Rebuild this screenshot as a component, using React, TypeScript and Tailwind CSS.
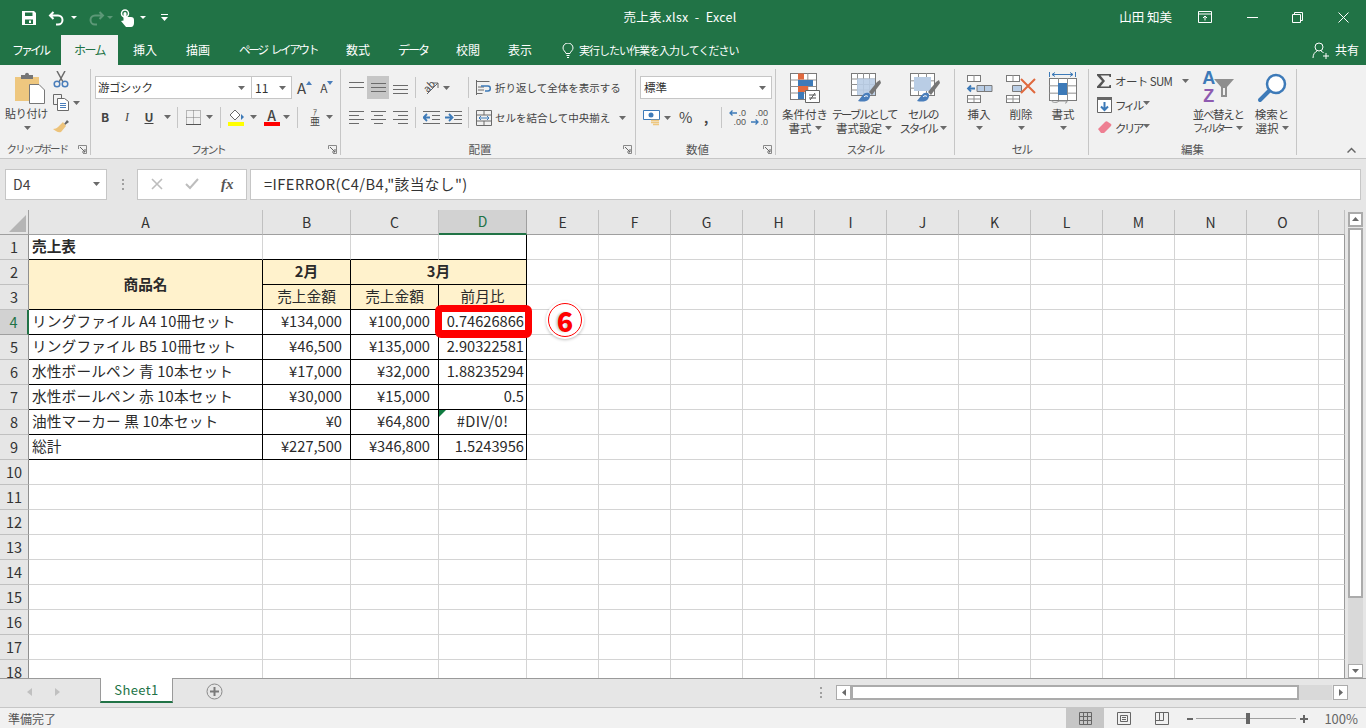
import type { ReactNode } from 'react'

const jp = { fontFamily: '"Noto Sans CJK JP", "Liberation Sans", sans-serif' }

const Caret = ({ className = '' }: { className?: string }) => (
  <svg width="7" height="4" viewBox="0 0 7 4" className={`inline-block shrink-0 ${className}`}>
    <path d="M0 0h7L3.5 4z" fill="#6a6a6a" />
  </svg>
)

const Sep = ({ className = '' }: { className?: string }) => <div className={`h-[21px] w-px shrink-0 bg-[#c6c6c6] ${className}`} />

const Launcher = () => (
  <svg width="9" height="9" viewBox="0 0 9 9" className="absolute right-[3px] top-[3px]">
    <path d="M.5 4V.5H8.500V8.500H5" fill="none" stroke="#8a8a8a" />
    <path d="M2 2l5 5M7 4v3H4" fill="none" stroke="#666" />
  </svg>
)

function Group({ width, label, launcher, children }: { width: string; label: ReactNode; launcher?: boolean; children: ReactNode }) {
  return (
    <div className={`flex h-[86px] shrink-0 flex-col border-r border-[#c6c6c6] ${width}`}>
      <div className="h-[73px] shrink-0">{children}</div>
      <div className={`relative flex h-[14px] shrink-0 items-center justify-center whitespace-nowrap text-[11.5px] leading-[14px] text-[#555] ${launcher ? 'pr-[16px]' : ''}`}>
        {label}
        {launcher && <Launcher />}
      </div>
    </div>
  )
}

function Large({ width, icon, lines, caretBelow }: { width: string; icon: ReactNode; lines: ReactNode[]; caretBelow?: boolean }) {
  return (
    <div className={`flex shrink-0 flex-col items-center ${width}`}>
      <div className="mt-[3px] flex h-[32px] items-center justify-center">{icon}</div>
      <div className="mt-[3px] whitespace-nowrap text-center text-[11.5px] leading-[14px] text-[#444]">
        {lines.map((l, i) => (
          <div key={i} className="flex items-center justify-center gap-[3px]">{l}</div>
        ))}
        {caretBelow && <div className="flex h-[14px] items-center justify-center"><Caret /></div>}
      </div>
    </div>
  )
}

const HLines = ({ rows, width = 15 }: { rows: [number, number][]; width?: number }) => (
  <svg width={width} height="17" viewBox={`0 0 ${width} 17`} className="shrink-0">
    {rows.map(([y, x], i) => (
      <path key={i} d={`M${x} ${y + 0.5}H${width - (i % 2 === 1 && x === 0 ? 0 : x)}`} stroke="#6b6b6b" />
    ))}
  </svg>
)

const AlignIcon = ({ kind }: { kind: 'l' | 'c' | 'r' }) => {
  const ys = [2, 6, 10, 14]
  const seg = (i: number) => {
    const short = i % 2 === 1
    if (!short) return 'M0 0H15'
    if (kind === 'l') return 'M0 0H10'
    if (kind === 'r') return 'M5 0H15'
    return 'M3 0H12'
  }
  return (
    <svg width="15" height="17" viewBox="0 0 15 17" className="shrink-0">
      {ys.map((y, i) => <path key={y} transform={`translate(0 ${y + 0.5})`} d={seg(i)} stroke="#6b6b6b" />)}
    </svg>
  )
}

const IndentIcon = ({ flip }: { flip?: boolean }) => (
  <svg width="17" height="17" viewBox="0 0 17 17" className="shrink-0">
    {[2, 14].map(y => <path key={y} d={`M0 ${y + 0.5}H17`} stroke="#6b6b6b" />)}
    {[6, 10].map(y => <path key={y} d={`M9 ${y + 0.5}H17`} stroke="#6b6b6b" />)}
    {flip
      ? <path d="M0 8.500H6M4 5l3.500 3.500L4 12" stroke="#3d7ab8" strokeWidth="1.800" fill="none" />
      : <path d="M7 8.500H1M4 5L.5 8.500 4 12" stroke="#3d7ab8" strokeWidth="1.800" fill="none" />}
  </svg>
)

const DecimalIcon = ({ more }: { more?: boolean }) => (
  <svg width="18" height="19" viewBox="0 0 18 19" className="shrink-0" fontSize="9" fill="#555" textAnchor="end" style={{ fontFamily: '"Liberation Sans", sans-serif' }}>
    <text x="17" y="8">{more ? '.00' : '.0'}</text>
    <text x="17" y="17">{more ? '.0' : '.00'}</text>
    {more
      ? <path d="M0 14h7M4.500 11.500L7 14l-2.500 2.500" fill="none" stroke="#3d7ab8" strokeWidth="1.300" />
      : <path d="M8 5H1M3.500 2.500L1 5l2.500 2.500" fill="none" stroke="#3d7ab8" strokeWidth="1.300" />}
  </svg>
)

const TableGrid = ({ x, y, w, h, cols, rows }: { x: number; y: number; w: number; h: number; cols: number; rows: number }) => (
  <>
    <rect x={x + 0.5} y={y + 0.5} width={w} height={h} fill="#fff" stroke="#7a7a7a" />
    {Array.from({ length: cols - 1 }, (_, i) => (
      <path key={`c${i}`} d={`M${x + 0.5 + ((i + 1) * w) / cols} ${y}v${h}`} stroke="#8f8f8f" />
    ))}
    {Array.from({ length: rows - 1 }, (_, i) => (
      <path key={`r${i}`} d={`M${x} ${y + 0.5 + ((i + 1) * h) / rows}h${w}`} stroke="#8f8f8f" />
    ))}
  </>
)

const Brush = () => (
  <>
    <path d="M26 9l3-2 1 3-9 12-3-3z" fill="#767676" />
    <path d="M18 20c-3-1-5 0-7 3l-4 5c4 1 9 1 11-2 1-2 2-4 0-6z" fill="#4a7ebb" />
    <path d="M13 24c1-1.500 3-1.500 4-.5" stroke="#fff" fill="none" />
  </>
)

function ColHead({ label, active }: { label: string; active?: boolean }) {
  return (
    <div className={`flex items-center justify-center border-b border-r text-[14px] ${active ? 'border-b-2 border-b-[#217346] border-r-[#9f9f9f] bg-[#d2d2d2] text-[#217346]' : 'border-b-[#9f9f9f] border-r-[#c0c0c0] bg-[#e6e6e6] text-[#333]'}`}>
      {label}
    </div>
  )
}

function RowHead({ n }: { n: number }) {
  const active = n === 4
  return (
    <div className={`flex items-center justify-center border-b text-[14.5px] ${active ? 'border-r-2 border-b-[#9f9f9f] border-r-[#217346] bg-[#d2d2d2] text-[#217346]' : 'border-r border-b-[#c0c0c0] border-r-[#8f8f8f] bg-[#e6e6e6] text-[#333]'}`}>
      {n}
    </div>
  )
}

function Cell({ className = '', children }: { className?: string; children?: ReactNode }) {
  return <div className={`relative flex items-center overflow-hidden whitespace-nowrap border-b border-r pb-[2px] text-[14.67px] text-[#2a2a2a] ${className}`}>{children}</div>
}

const black = 'border-black'
const numB = 'border-black justify-end pr-[8px] text-[14.3px]'
const numD = 'border-black justify-end pr-[2px] text-[14.3px]'
const head = 'border-black justify-center bg-[#fff2cc]'

const dataRows = [
  ['リングファイル A4 10冊セット', '¥134,000', '¥100,000', '0.74626866'],
  ['リングファイル B5 10冊セット', '¥46,500', '¥135,000', '2.90322581'],
  ['水性ボールペン 青 10本セット', '¥17,000', '¥32,000', '1.88235294'],
  ['水性ボールペン 赤 10本セット', '¥30,000', '¥15,000', '0.5'],
  ['油性マーカー 黒 10本セット', '¥0', '¥64,800', '#DIV/0!'],
  ['総計', '¥227,500', '¥346,800', '1.5243956'],
]

const emptyCols = Array.from({ length: 12 }, (_, i) => i)
const colLetters = ['E', 'F', 'G', 'H', 'I', 'J', 'K', 'L', 'M', 'N', 'O', '']

const Blanks = ({ row }: { row: number }) => (
  <>
    {emptyCols.map(i => (
      <Cell key={`${row}-${i}`} className={`border-b-[#d4d4d4] ${i === 11 ? 'border-r-[#9a9a9a]' : 'border-r-[#d4d4d4]'}`} />
    ))}
  </>
)

function Sheet() {
  return (
    <div className="relative flex h-[468px] overflow-hidden bg-[#e6e6e6]">
      <div className="grid w-[1345px] shrink-0 grid-cols-[29px_234px_88px_88px_88px_repeat(11,72px)_26px] auto-rows-[25px] bg-white">
        <div className="flex items-end justify-end border-b border-r border-b-[#9f9f9f] border-r-[#9f9f9f] bg-[#e6e6e6] pb-[2px] pr-[2px]">
          <svg width="17" height="17" viewBox="0 0 17 17"><path d="M17 0v17H0z" fill="#b5b5b5" /></svg>
        </div>
        <ColHead label="A" />
        <ColHead label="B" />
        <ColHead label="C" />
        <ColHead label="D" active />
        {colLetters.map((c, i) => <ColHead key={i} label={c} />)}

        <RowHead n={1} />
        <Cell className="border-b-black border-r-[#d4d4d4] pl-[3px] font-bold">売上表</Cell>
        <Cell className="border-b-black border-r-[#d4d4d4]" />
        <Cell className="border-b-black border-r-[#d4d4d4]" />
        <Cell className="border-b-black border-r-black" />
        <Blanks row={1} />

        <RowHead n={2} />
        <Cell className={`row-span-2 font-bold ${head}`}>商品名</Cell>
        <Cell className={`font-bold ${head}`}>2月</Cell>
        <Cell className={`col-span-2 font-bold ${head}`}>3月</Cell>
        <Blanks row={2} />

        <RowHead n={3} />
        <Cell className={head}>売上金額</Cell>
        <Cell className={head}>売上金額</Cell>
        <Cell className={head}>前月比</Cell>
        <Blanks row={3} />

        {dataRows.map((r, i) => (
          <div key={i} className="contents">
            <RowHead n={i + 4} />
            <Cell className={`${black} pl-[3px] tracking-[0.15px]`}>{r[0]}</Cell>
            <Cell className={numB}>{r[1]}</Cell>
            <Cell className={numB}>{r[2]}</Cell>
            {r[3] === '#DIV/0!' ? (
              <Cell className={`${black} justify-center text-[14.3px] tracking-[0.4px]`}>
                <svg width="7" height="7" viewBox="0 0 7 7" className="absolute left-0 top-0"><path d="M0 0h7L0 7z" fill="#107c41" /></svg>
                {r[3]}
              </Cell>
            ) : (
              <Cell className={numD}>{r[3]}</Cell>
            )}
            <Blanks row={i + 4} />
          </div>
        ))}

        {[10, 11, 12, 13, 14, 15, 16, 17, 18].map(n => (
          <div key={n} className="contents">
            <RowHead n={n} />
            <Cell className="border-b-[#d4d4d4] border-r-[#d4d4d4]" />
            <Cell className="border-b-[#d4d4d4] border-r-[#d4d4d4]" />
            <Cell className="border-b-[#d4d4d4] border-r-[#d4d4d4]" />
            <Cell className="border-b-[#d4d4d4] border-r-[#d4d4d4]" />
            <Blanks row={n} />
          </div>
        ))}
      </div>

      {/* vertical scrollbar */}
      <div className="flex w-[21px] flex-col pl-[3px] pt-[2px]">
        <div className="flex h-[15px] w-[15px] items-center justify-center border-2 border-[#ababab] bg-white">
          <svg width="7" height="4" viewBox="0 0 7 4"><path d="M0 4h7L3.500 0z" fill="#6a6a6a" /></svg>
        </div>
        <div className="mt-px h-[371px] w-[15px] border-2 border-[#ababab] bg-white" />
        <div className="h-[66px] w-[15px] bg-[#d9d9d9]" />
        <div className="flex h-[14px] w-[15px] items-center justify-center border border-[#ababab] bg-white">
          <Caret />
        </div>
      </div>

      {/* annotation */}
      <div className="absolute left-[435px] top-[95px] h-[33px] w-[97px] rounded-[6px] border-[7px] border-b-[8px] border-[#ff0000]" />
      <div className="absolute left-[546px] top-[91px] flex h-[38px] w-[38px] items-center justify-center rounded-full bg-white shadow-[0_1px_3px_rgba(0,0,0,0.25)]">
        <div className="flex h-[34px] w-[34px] items-center justify-center rounded-full border border-[#ff0000] text-[27px] font-black leading-none text-[#ff0000] [text-shadow:-2px_0_2px_rgba(0,0,0,0.18)]" style={{ fontFamily: '"Noto Sans CJK JP", sans-serif' }}>
          6
        </div>
      </div>
    </div>
  )
}

export default function App() {
  return (
    <div className="h-[728px] w-[1366px] overflow-hidden bg-[#e6e6e6]" style={jp}>
      {/* title bar */}
      <div className="flex h-[35px] items-center bg-[#217346] text-white">
        <svg width="16" height="16" viewBox="0 0 16 16" className="ml-[21px]">
          <path fillRule="evenodd" d="M1 1h12l2 2v12H1zM4 2.500V6h7.500V2.500zM4 9.500V14h8V9.500zM8 10.500h2V13H8z" fill="#fff" />
        </svg>
        <svg width="18" height="16" viewBox="0 0 18 16" className="ml-[11px]">
          <path d="M5.500 2L2 5.500 5.500 9M2.500 5.500H10a4.500 4.500 0 0 1 0 9H8" fill="none" stroke="#fff" strokeWidth="2" />
        </svg>
        <svg width="6" height="3" viewBox="0 0 6 3" className="ml-[5px]"><path d="M0 0h6L3 3z" fill="#fff" /></svg>
        <svg width="18" height="16" viewBox="0 0 18 16" className="ml-[10px]">
          <path d="M12.500 2L16 5.500 12.500 9M15.500 5.500H8a4.500 4.500 0 0 0 0 9h2" fill="none" stroke="#5c9877" strokeWidth="2" />
        </svg>
        <svg width="6" height="3" viewBox="0 0 6 3" className="ml-[2px]"><path d="M0 0h6L3 3z" fill="#5c9877" /></svg>
        <svg width="14" height="18" viewBox="0 0 14 18" className="ml-[7px]">
          <circle cx="5" cy="4.500" r="3.500" fill="none" stroke="#fff" strokeWidth="1.500" />
          <path d="M3.500 4.500a1.500 1.500 0 0 1 3 0V8H11c2 0 3 1 3 3v3c0 2-1 4-3 4H6L1 12l2.500-.5z" fill="#fff" />
        </svg>
        <svg width="6" height="3" viewBox="0 0 6 3" className="ml-[6px]"><path d="M0 0h6L3 3z" fill="#fff" /></svg>
        <svg width="7" height="7" viewBox="0 0 7 7" className="ml-[15px]">
          <path d="M0 .5h7" stroke="#fff" /><path d="M0 3h7L3.500 7z" fill="#fff" />
        </svg>
        <div className="absolute left-[-3px] w-[1366px] whitespace-pre text-center text-[12.5px] tracking-[0.3px]">売上表.xlsx  -  Excel</div>
        <div className="ml-auto flex items-center">
          <span className="text-[12.5px]">山田 知美</span>
          <svg width="14" height="13" viewBox="0 0 14 13" className="ml-[26px]">
            <path d="M.5.5h13v11H.5zM.5 3h13M7 9.500V5M5 7l2-2 2 2" fill="none" stroke="#fff" />
          </svg>
          <div className="ml-[35px] h-px w-[11px] bg-white" />
          <svg width="11" height="11" viewBox="0 0 11 11" className="ml-[34px]">
            <path d="M.5 2.500h8v8h-8zM2.500 2.500v-2h8v8h-2" fill="none" stroke="#fff" />
          </svg>
          <svg width="11" height="11" viewBox="0 0 11 11" className="ml-[35px] mr-[17px]">
            <path d="M.5.5l10 10M10.500.5l-10 10" stroke="#fff" />
          </svg>
        </div>
      </div>

      {/* tabs */}
      <div className="flex h-[30px] items-center whitespace-nowrap bg-[#217346] text-[12px] text-white">
        <span className="ml-[12px] w-[49px] tracking-[-3px]">ファイル</span>
        <span className="flex h-full w-[57px] items-center justify-center bg-[#f1f1f1] tracking-[-1.5px] text-[#217346]">ホーム</span>
        <span className="ml-[15px]">挿入</span>
        <span className="ml-[29px]">描画</span>
        <span className="ml-[29px] flex w-[78px] gap-[4px] text-[11.5px] tracking-[-2.2px]"><span>ページ</span><span>レイアウト</span></span>
        <span className="ml-[29px]">数式</span>
        <span className="ml-[28px] w-[30px] tracking-[-2px]">データ</span>
        <span className="ml-[28px]">校閲</span>
        <span className="ml-[28px]">表示</span>
        <svg width="12" height="15" viewBox="0 0 12 15" className="ml-[30px]">
          <path d="M4 10.500C3.500 8.500 1 7.500 1 5a5 5 0 0 1 10 0c0 2.500-2.500 3.500-3 5.500zM4.500 12.500h3M5 14.500h2" fill="none" stroke="#fff" />
        </svg>
        <span className="ml-[5px] text-[11px] tracking-[-1px]">実行したい作業を入力してください</span>
        <svg width="17" height="17" viewBox="0 0 17 17" className="ml-auto">
          <circle cx="7" cy="5" r="4" fill="none" stroke="#fff" />
          <path d="M1 16c0-4 2-6 4-7M9 9c1 .5 2 1 2.500 2M11 14h6M14 11v6" fill="none" stroke="#fff" />
        </svg>
        <span className="ml-[6px] mr-[7px]">共有</span>
      </div>

      {/* ribbon */}
      <div className="relative flex h-[94px] border-b border-[#c6c6c6] bg-[#f1f1f1] pt-[4px] text-[#444]">
        <Group width="w-[91px]" label={<span className="text-[10.5px] tracking-[-1.8px]">クリップボード</span>} launcher>
          <div className="flex">
            <div className="flex w-[53px] flex-col items-center">
              <svg width="30" height="32" viewBox="0 0 30 32" className="mt-[3px] ml-[6px]">
                <path d="M0 5h24v24H0z" fill="#eec77f" />
                <path d="M6 3h4c0-3 4-3 4 0h4v4H6z" fill="#767676" />
                <path d="M14.500 12.500H24l5.500 5.500v13.500h-15z" fill="#fff" stroke="#777" />
              </svg>
              <div className="mt-[2px] whitespace-nowrap text-[11px] leading-[14px] tracking-[-0.3px]">貼り付け</div>
              <Caret className="mt-[6px] ml-[2px]" />
            </div>
            <div className="flex flex-col pt-[2px]">
              <svg width="16" height="17" viewBox="0 0 16 17">
                <path d="M4 0l6 11M12 0L6 11" stroke="#6a6a6a" strokeWidth="1.500" />
                <circle cx="4" cy="13" r="2.800" fill="none" stroke="#4a7ebb" strokeWidth="1.500" />
                <circle cx="12" cy="13" r="2.800" fill="none" stroke="#4a7ebb" strokeWidth="1.500" />
              </svg>
              <div className="mt-[6px] flex items-center">
                <svg width="16" height="17" viewBox="0 0 16 17">
                  <path d="M.5.5h8v10h-8z" fill="#f1f1f1" stroke="#6a6a6a" />
                  <path d="M4.500 4.500h7l4 3v9h-11z" fill="#fff" stroke="#6a6a6a" />
                  <path d="M7 9.500h6M7 11.500h6M7 13.500h6" stroke="#4a7ebb" />
                </svg>
                <Caret className="ml-[4px]" />
              </div>
              <svg width="17" height="16" viewBox="0 0 17 16" className="mt-[7px]">
                <path d="M11 6l3-4 2 2-4 3z" fill="#666" />
                <path d="M10 4l3 4-5 6c-3 1-5-1-8-3 2 0 4-1 5-2z" fill="#edc37a" />
              </svg>
            </div>
          </div>
        </Group>

        <Group width="w-[250px]" label={<span className="text-[11px] tracking-[-2.8px]">フォント</span>} launcher>
          <div className="flex items-center pl-[4px] pt-[7px]">
            <div className="flex h-[23px] w-[157px] items-center justify-between border border-[#c6c6c6] bg-white px-[2px] pr-[6px] text-[11.5px] text-[#333]">
              <span className="tracking-[-0.6px]">游ゴシック</span><Caret />
            </div>
            <div className="flex h-[23px] w-[40px] items-center justify-between border border-l-0 border-[#c6c6c6] bg-white pl-[3px] pr-[5px] text-[12px] text-[#333]">
              11<Caret />
            </div>
            <span className="ml-[5px] text-[15px] leading-none">A</span>
            <svg width="6" height="4" viewBox="0 0 6 4" className="mb-[10px]"><path d="M0 4h6L3 0z" fill="#4a7ebb" /></svg>
            <span className="ml-[8px] text-[12px] leading-none">A</span>
            <svg width="6" height="4" viewBox="0 0 6 4" className="mb-[10px]"><path d="M0 0h6L3 4z" fill="#4a7ebb" /></svg>
          </div>
          <div className="mt-[6px] flex h-[24px] items-center pl-[3px] text-[12px]">
            <span className="w-[22px] text-center font-bold">B</span>
            <span className="w-[22px] text-center italic" style={{ fontFamily: '"Liberation Serif", serif' }}>I</span>
            <span className="w-[22px] text-center font-bold underline">U</span>
            <Caret className="ml-[4px]" />
            <Sep className="ml-[6px]" />
            <svg width="15" height="15" viewBox="0 0 15 15" className="ml-[8px]">
              <path d="M.5.5h14v14H.5zM7.500.5v14M.5 7.500h14" fill="none" stroke="#7a7a7a" strokeDasharray="1 1" />
              <path d="M0 14.500h15" stroke="#555" />
            </svg>
            <Caret className="ml-[5px]" />
            <Sep className="ml-[7px]" />
            <div className="ml-[7px] flex w-[17px] flex-col">
              <svg width="17" height="13" viewBox="0 0 17 13">
                <path d="M2 6l5-5 5 5-5 5z" fill="#fff" stroke="#666" />
                <path d="M13 5l3 3-3 3z" fill="#3d7ab8" />
              </svg>
              <div className="h-[4px] w-[16px] bg-[#ffff00]" />
            </div>
            <Caret className="ml-[5px]" />
            <div className="ml-[6px] flex w-[17px] flex-col items-center">
              <span className="text-[14px] font-medium leading-[13px]">A</span>
              <div className="h-[4px] w-[16px] bg-[#ff0000]" />
            </div>
            <Caret className="ml-[3px]" />
            <Sep className="ml-[7px]" />
            <svg width="14" height="20" viewBox="0 0 14 20" className="ml-[10px] shrink-0" fill="#444" textAnchor="middle">
              <text x="7" y="8" fontSize="8">ｱ</text>
              <text x="7" y="18" fontSize="10">亜</text>
            </svg>
            <Caret className="ml-[4px]" />
          </div>
        </Group>

        <Group width="w-[295px]" label="配置" launcher>
          <div className="mt-[7px] flex h-[23px] items-center pl-[8px]">
            <HLines rows={[[3, 0], [8, 0]]} />
            <div className="ml-[3px] flex h-[23px] w-[22px] items-center justify-center bg-[#c6c6c6]"><HLines rows={[[4, 0], [8, 0], [12, 0]]} /></div>
            <div className="ml-[4px]"><HLines rows={[[6, 0], [10, 0], [14, 0]]} /></div>
            <Sep className="ml-[7px]" />
            <div className="relative ml-[7px] h-[17px] w-[17px]">
              <span className="absolute left-0 top-0 rotate-[-45deg] text-[10px] leading-[14px]">ab</span>
              <svg width="17" height="17" viewBox="0 0 17 17" className="absolute left-0 top-0"><path d="M4 15L15 4M10 4h5v5" fill="none" stroke="#666" /></svg>
            </div>
            <Caret className="ml-[3px]" />
            <Sep className="ml-[18px]" />
            <svg width="16" height="17" viewBox="0 0 16 17" className="ml-[7px]">
              <path d="M.5 1v15M.5 2.500h13M2 8h6M2 11h6M.5 14.500h6" fill="none" stroke="#6b6b6b" />
              <path d="M9 12h3c3 0 3-5 0-5H5" fill="none" stroke="#3d7ab8" strokeWidth="1.500" />
            </svg>
            <span className="ml-[3px] whitespace-nowrap text-[10.5px]">折り返して全体を表示する</span>
          </div>
          <div className="mt-[7px] flex h-[23px] items-center pl-[8px]">
            <AlignIcon kind="l" />
            <div className="ml-[7px]"><AlignIcon kind="c" /></div>
            <div className="ml-[7px]"><AlignIcon kind="r" /></div>
            <Sep className="ml-[7px]" />
            <div className="ml-[7px]"><IndentIcon /></div>
            <div className="ml-[5px]"><IndentIcon flip /></div>
            <Sep className="ml-[6px]" />
            <svg width="16" height="16" viewBox="0 0 16 16" className="ml-[7px]">
              <path d="M.5.5h15v15H.5zM.5 5h15M.5 11h15M8 .5V5M8 11v4.500" fill="none" stroke="#6b6b6b" />
              <path d="M3 8h10M5 6L3 8l2 2M11 6l2 2-2 2" fill="none" stroke="#3d7ab8" />
            </svg>
            <span className="ml-[3px] whitespace-nowrap text-[10.5px]">セルを結合して中央揃え</span>
            <Caret className="ml-[9px]" />
          </div>
        </Group>

        <Group width="w-[140px]" label="数値" launcher>
          <div className="ml-[4px] mt-[7px] flex h-[23px] w-[132px] items-center justify-between border border-[#c6c6c6] bg-white pl-[3px] pr-[5px] text-[11.5px] text-[#333]">
            標準<Caret />
          </div>
          <div className="mt-[7px] flex h-[23px] items-center pl-[7px]">
            <svg width="17" height="17" viewBox="0 0 17 17" className="shrink-0">
              <path d="M.5 1.500h16v9H.5z" fill="#fff" stroke="#3d7ab8" />
              <circle cx="8" cy="6" r="2.500" fill="#3d7ab8" />
              <path d="M8 11.500h8M8 13.500h8M10 15.500h6" stroke="#eec77f" strokeWidth="1.500" />
            </svg>
            <Caret className="ml-[4px]" />
            <span className="ml-[8px] w-[13px] text-[14.5px] leading-none">%</span>
            <span className="ml-[12px] w-[4px] text-[13px] font-bold leading-none">,</span>
            <Sep className="ml-[13px]" />
            <div className="ml-[7px]"><DecimalIcon /></div>
            <div className="ml-[4px]"><DecimalIcon more /></div>
          </div>
        </Group>

        <Group width="w-[179px]" label={<span className="text-[11px] tracking-[-1.8px]">スタイル</span>}>
          <div className="flex">
            <Large
              width="w-[58px]"
              lines={['条件付き', <>書式 <Caret /></>]}
              icon={
                <svg width="30" height="30" viewBox="0 0 30 30">
                  <TableGrid x={0} y={0} w={26} h={26} cols={3} rows={4} />
                  <path d="M8 .5h6v6H8z" fill="#e0693e" /><path d="M8 7h15v6H8z" fill="#3d7ab8" /><path d="M8 13h10v6H8z" fill="#e0693e" /><path d="M8 19h6v7H8z" fill="#3d7ab8" />
                  <path d="M15.500 17.500h14v12h-14z" fill="#fff" stroke="#666" />
                  <path d="M19 22h7M19 25h7M25 20l-5 7" stroke="#555" />
                </svg>
              }
            />
            <Large
              width="w-[60px]"
              lines={[<span key="a" className="tracking-[-2.1px]">テーブルとして</span>, <>書式設定 <Caret /></>]}
              icon={
                <svg width="30" height="30" viewBox="0 0 30 30" className="ml-[3px]">
                  <TableGrid x={0} y={0} w={24} h={22} cols={4} rows={4} />
                  <path d="M6 5.500h18V22H6z" fill="#b9cde5" opacity="0.9" />
                  <Brush />
                </svg>
              }
            />
            <Large
              width="w-[58px]"
              lines={[<span key="a" className="tracking-[-1.5px]">セルの</span>, <><span className="tracking-[-2.2px]">スタイル</span> <Caret /></>]}
              icon={
                <svg width="30" height="30" viewBox="0 0 30 30" className="ml-[3px]">
                  <TableGrid x={0} y={0} w={24} h={22} cols={3} rows={3} />
                  <path d="M4 4h17v14H4z" fill="#b9cde5" />
                  <Brush />
                </svg>
              }
            />
          </div>
        </Group>

        <Group width="w-[134px]" label={<span className="tracking-[-1.5px]">セル</span>}>
          <div className="flex pl-[3px]">
            <Large
              width="w-[42px]"
              caretBelow
              lines={['挿入']}
              icon={
                <svg width="27" height="30" viewBox="0 0 27 30">
                  <TableGrid x={1} y={2} w={13} h={6} cols={2} rows={1} />
                  <path d="M11 12.500h15v6H11z" fill="#b9cde5" stroke="#7a7a7a" /><path d="M18.500 12v7" stroke="#7a7a7a" />
                  <path d="M9 15.500H2M5 12.500l-3 3 3 3" fill="none" stroke="#3d7ab8" strokeWidth="1.800" />
                  <TableGrid x={1} y={22} w={13} h={7} cols={2} rows={2} />
                </svg>
              }
            />
            <Large
              width="w-[42px]"
              caretBelow
              lines={['削除']}
              icon={
                <svg width="30" height="30" viewBox="0 0 30 30">
                  <TableGrid x={0} y={2} w={13} h={6} cols={2} rows={1} />
                  <path d="M6.500 12.500h9v6h-9z" fill="#b9cde5" stroke="#7a7a7a" />
                  <TableGrid x={0} y={22} w={13} h={7} cols={2} rows={2} />
                  <path d="M15 6l14 14M29 6L15 20" stroke="#e0693e" strokeWidth="2" />
                </svg>
              }
            />
            <Large
              width="w-[42px]"
              caretBelow
              lines={['書式']}
              icon={
                <svg width="28" height="32" viewBox="0 0 28 32">
                  <path d="M.5 0v5M26.500 0v5M3 2.500h21M6 .5l-3 2 3 2M21 .5l3 2-3 2" fill="none" stroke="#3d7ab8" />
                  <TableGrid x={0} y={6} w={27} h={22} cols={3} rows={3} />
                  <path d="M9 11h9v12H9z" fill="#3d7ab8" />
                  <path d="M2 28c1 3 6 3 8 1M10 29h8c0 2-1 2-2 2" fill="none" stroke="#8f8f8f" />
                </svg>
              }
            />
          </div>
        </Group>

        <Group width="w-[208px]" label="編集">
          <div className="flex pl-[7px]">
            <div className="flex w-[101px] flex-col text-[11.5px] leading-[14px]">
              <div className="mt-[2px] flex h-[19px] items-center">
                <svg width="16" height="16" viewBox="0 0 16 16"><path d="M1 1h14v3h-1.500L13 2.500H4.500L9 8l-4.500 5.500H13l.5-1.500H15v3H1v-1.500L6 8 1 2.500z" fill="#555" /></svg>
                <span className="ml-[3px] w-[58px] whitespace-nowrap tracking-[-0.6px]">オート SUM</span>
                <Caret className="ml-[9px]" />
              </div>
              <div className="mt-[6px] flex h-[17px] items-center">
                <svg width="15" height="16" viewBox="0 0 15 16" className="ml-px">
                  <path d="M.5 .5h14v15H.5z" fill="#fff" stroke="#666" /><path d="M0 0h15v3H0z" fill="#666" />
                  <path d="M7.500 5v8M4 9.500l3.500 3.500L11 9.500" fill="none" stroke="#3d7ab8" strokeWidth="2" />
                </svg>
                <span className="ml-[3px] w-[25px] whitespace-nowrap tracking-[-2.5px]">フィル</span>
                <Caret className="ml-[3px] -translate-y-[2px]" />
              </div>
              <div className="mt-[6px] flex h-[17px] items-center">
                <svg width="15" height="13" viewBox="0 0 15 13" className="ml-px">
                  <path d="M1 8l7-7c1-1 2-1 3 0l3 2c1 1 0 2-1 3l-6 6H4z" fill="#ee7f92" />
                </svg>
                <span className="ml-[3px] w-[25px] whitespace-nowrap tracking-[-2.5px]">クリア</span>
                <Caret className="ml-[3px] -translate-y-[2px]" />
              </div>
            </div>
            <Large
              width="w-[50px]"
              lines={[<span key="a" className="tracking-[-1.3px]">並べ替えと</span>, <><span className="text-[10.5px] tracking-[-3px]">フィルター</span> <Caret className="ml-[3px]" /></>]}
              icon={
                <div className="relative h-[32px] w-[36px] font-bold" style={{ fontFamily: '"Liberation Sans", sans-serif' }}>
                  <span className="absolute left-[2px] top-[-3px] text-[18px] leading-[18px] text-[#3d7ab8]">A</span>
                  <span className="absolute left-[3px] top-[15px] text-[18px] leading-[18px] text-[#8e5bb0]">Z</span>
                  <svg width="20" height="18" viewBox="0 0 20 18" className="absolute left-[14px] top-[7px]">
                    <path d="M0 0h20l-7 8v10H7V8z" fill="#8f8f8f" /><path d="M9 9v7h2V9z" fill="#f1f1f1" />
                  </svg>
                </div>
              }
            />
            <div className="w-[5px]" />
            <Large
              width="w-[48px]"
              lines={['検索と', <>選択 <Caret /></>]}
              icon={
                <svg width="30" height="30" viewBox="0 0 30 30">
                  <circle cx="19" cy="11" r="9" fill="#fff" stroke="#3d7ab8" strokeWidth="2.500" />
                  <path d="M12 18L3 27" stroke="#3d7ab8" strokeWidth="4" strokeLinecap="round" />
                </svg>
              }
            />
          </div>
        </Group>

        <svg width="9" height="6" viewBox="0 0 9 6" className="absolute left-[1347px] top-[82px]">
          <path d="M.5 5.500l4-4 4 4" fill="none" stroke="#666" strokeWidth="1.500" />
        </svg>
      </div>

      {/* formula bar */}
      <div className="flex h-[51px] items-center pb-px pl-[5px]">
        <div className="flex h-[31px] w-[102px] items-center justify-between border border-[#c6c6c6] bg-white pl-[7px] pr-[6px] text-[14px] text-[#444]">
          D4<Caret />
        </div>
        <div className="ml-[15px] flex h-[11px] w-[2px] flex-col justify-between">
          <div className="h-[2px] bg-[#a0a0a0]" /><div className="h-[2px] bg-[#a0a0a0]" /><div className="h-[2px] bg-[#a0a0a0]" />
        </div>
        <div className="ml-[13px] flex h-[31px] w-[110px] items-center border border-[#c6c6c6] bg-white pl-[13px]">
          <svg width="12" height="12" viewBox="0 0 12 12"><path d="M1 1l10 10M11 1L1 11" stroke="#bdbdbd" strokeWidth="1.600" /></svg>
          <svg width="14" height="12" viewBox="0 0 14 12" className="ml-[22px]"><path d="M1 6l4 4 8-9" fill="none" stroke="#bdbdbd" strokeWidth="2" /></svg>
          <span className="ml-[22px] text-[15px] font-bold italic text-[#555]" style={{ fontFamily: '"Liberation Serif", serif' }}>fx</span>
        </div>
        <div className="ml-[3px] flex h-[31px] w-[1111px] items-center border border-[#c6c6c6] bg-white pl-[13px] text-[14.67px] tracking-[0.45px] text-[#333]">
          =IFERROR(C4/B4,"該当なし")
        </div>
      </div>

      <Sheet />

      {/* sheet tabs + horizontal scroll */}
      <div className="flex h-[29px] items-start border-t border-[#9a9a9a]">
        <svg width="5" height="8" viewBox="0 0 5 8" className="ml-[27px] mt-[9px]"><path d="M5 0v8L0 4z" fill="#c0c0c0" /></svg>
        <svg width="5" height="8" viewBox="0 0 5 8" className="ml-[23px] mt-[9px]"><path d="M0 0v8l5-4z" fill="#c0c0c0" /></svg>
        <div className="ml-[40px] -mt-px flex h-[25px] w-[73px] items-center justify-center border-x border-b-2 border-x-[#9a9a9a] border-b-[#217346] bg-white text-[13px] tracking-[0.4px] text-[#217346]">
          Sheet1
        </div>
        <svg width="17" height="17" viewBox="0 0 17 17" className="ml-[33px] mt-[4px]">
          <circle cx="8.500" cy="8.500" r="7.500" fill="none" stroke="#8a8a8a" />
          <path d="M8.500 4v9M4 8.500h9" stroke="#7a7a7a" strokeWidth="2" />
        </svg>
        <div className="ml-[597px] mt-[8px] flex h-[11px] w-[2px] flex-col justify-between">
          <div className="h-[2px] bg-[#a0a0a0]" /><div className="h-[2px] bg-[#a0a0a0]" /><div className="h-[2px] bg-[#a0a0a0]" />
        </div>
        <div className="ml-[14px] mt-[6px] flex h-[15px] w-[15px] items-center justify-center border border-[#ababab] bg-white">
          <svg width="4" height="7" viewBox="0 0 4 7"><path d="M4 0v7L0 3.500z" fill="#6a6a6a" /></svg>
        </div>
        <div className="mt-[6px] h-[15px] w-[448px] border-2 border-[#ababab] bg-white" />
        <div className="mt-[6px] h-[15px] w-[33px] bg-[#d9d9d9]" />
        <div className="ml-px mt-[6px] flex h-[15px] w-[15px] items-center justify-center border border-[#ababab] bg-white">
          <svg width="4" height="7" viewBox="0 0 4 7"><path d="M0 0v7l4-3.500z" fill="#6a6a6a" /></svg>
        </div>
      </div>

      {/* status bar */}
      <div className="flex h-[22px] items-center border-t border-[#c6c6c6] bg-[#f1f1f1] text-[12px] text-[#555]">
        <span className="ml-[8px]">準備完了</span>
        <div className="ml-auto flex h-full items-center">
          <div className="flex h-full w-[38px] items-center justify-center bg-[#c6c6c6]">
            <svg width="13" height="13" viewBox="0 0 13 13"><path d="M.5.5h12v12H.5zM4.500.5v12M8.500.5v12M.5 4.500h12M.5 8.500h12" fill="none" stroke="#666" /></svg>
          </div>
          <svg width="14" height="13" viewBox="0 0 14 13" className="ml-[13px]"><path d="M.5.5h13v12H.5zM3.500 3.500h7v6h-7zM5 5.500h4M5 7.500h4" fill="none" stroke="#666" /></svg>
          <svg width="14" height="13" viewBox="0 0 14 13" className="ml-[24px]"><path d="M.5.5h13v12H.5zM.5 8.500h8V.5M4.500.5v8" fill="none" stroke="#666" /></svg>
          <div className="ml-[18px] h-[2px] w-[6px] bg-[#666]" />
          <div className="relative flex h-[11px] w-[107px] items-center pl-[3px]">
            <div className="h-px w-[100px] bg-[#a0a0a0]" />
            <div className="absolute left-[53px] top-0 h-[11px] w-[4px] bg-[#666]" />
          </div>
          <svg width="8" height="8" viewBox="0 0 8 8"><path d="M4 0v8M0 4h8" stroke="#666" strokeWidth="2" /></svg>
          <span className="ml-[16px] mr-[8px] text-[13px] text-[#666]">100%</span>
        </div>
      </div>
    </div>
  )
}
